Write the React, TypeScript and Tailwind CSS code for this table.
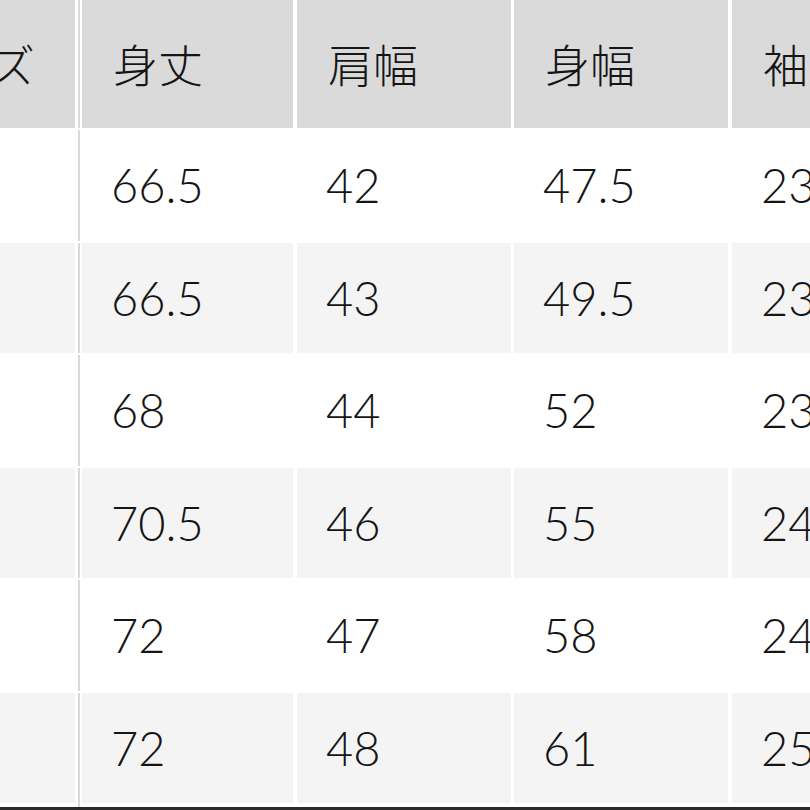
import React from 'react';

const headers = ['身丈', '肩幅', '身幅', '袖丈'];

const rows = [
  ['66.5', '42', '47.5', '23'],
  ['66.5', '43', '49.5', '23'],
  ['68', '44', '52', '23'],
  ['70.5', '46', '55', '24'],
  ['72', '47', '58', '24'],
  ['72', '48', '61', '25'],
];

// widths + left offsets for the data columns
const colClass = [
  'w-[211px] shrink-0',
  'ml-[4px] w-[214px] shrink-0',
  'ml-[3px] w-[214px] shrink-0',
  'ml-[4px] w-[120px] shrink-0',
];

const cjk = { fontFamily: '"Noto Sans CJK JP", "Noto Sans", sans-serif' };
const num = { fontFamily: 'Lato, "Noto Sans", sans-serif' };

export default function App() {
  return (
    <div className="w-[810px] h-[810px] overflow-hidden bg-white text-[#151515]">
      {/* header */}
      <div className="flex h-[128px]">
        <div className="w-[75px] shrink-0 overflow-hidden bg-[#dadada] flex items-center justify-end pr-[40px]">
          <span className="text-[45px] font-light whitespace-nowrap" style={cjk}>サイズ</span>
        </div>
        <div className="w-[7px] shrink-0 flex justify-center">
          <div className="w-[2px] bg-[#d9d9d9]" />
        </div>
        {headers.map((h, i) => (
          <div key={h} className={`${colClass[i]} bg-[#dadada] flex items-center pl-[31px] overflow-hidden`}>
            <span className="text-[45px] font-light whitespace-nowrap" style={cjk}>{h}</span>
          </div>
        ))}
      </div>

      {/* body */}
      {rows.map((r, ri) => {
        const bg = ri % 2 === 0 ? 'bg-white' : 'bg-[#f4f4f4]';
        return (
          <div key={ri} className="flex h-[110.5px] mt-[2px]">
            <div className={`w-[75px] shrink-0 ${bg}`} />
            <div className="w-[7px] shrink-0 flex justify-center">
              <div className="w-[2px] bg-[#d9d9d9]" />
            </div>
            {r.map((v, i) => (
              <div key={i} className={`${colClass[i]} ${bg} flex items-center pl-[29px] overflow-hidden`}>
                <span className="text-[47px] font-light whitespace-nowrap" style={num}>{v}</span>
              </div>
            ))}
          </div>
        );
      })}

      <div className="flex h-[4px]">
        <div className="w-[75px] shrink-0" />
        <div className="w-[7px] shrink-0 flex justify-center">
          <div className="w-[2px] bg-[#d9d9d9]" />
        </div>
      </div>
      <div className="h-[3px] bg-[#2a2a2a]" />
    </div>
  );
}
